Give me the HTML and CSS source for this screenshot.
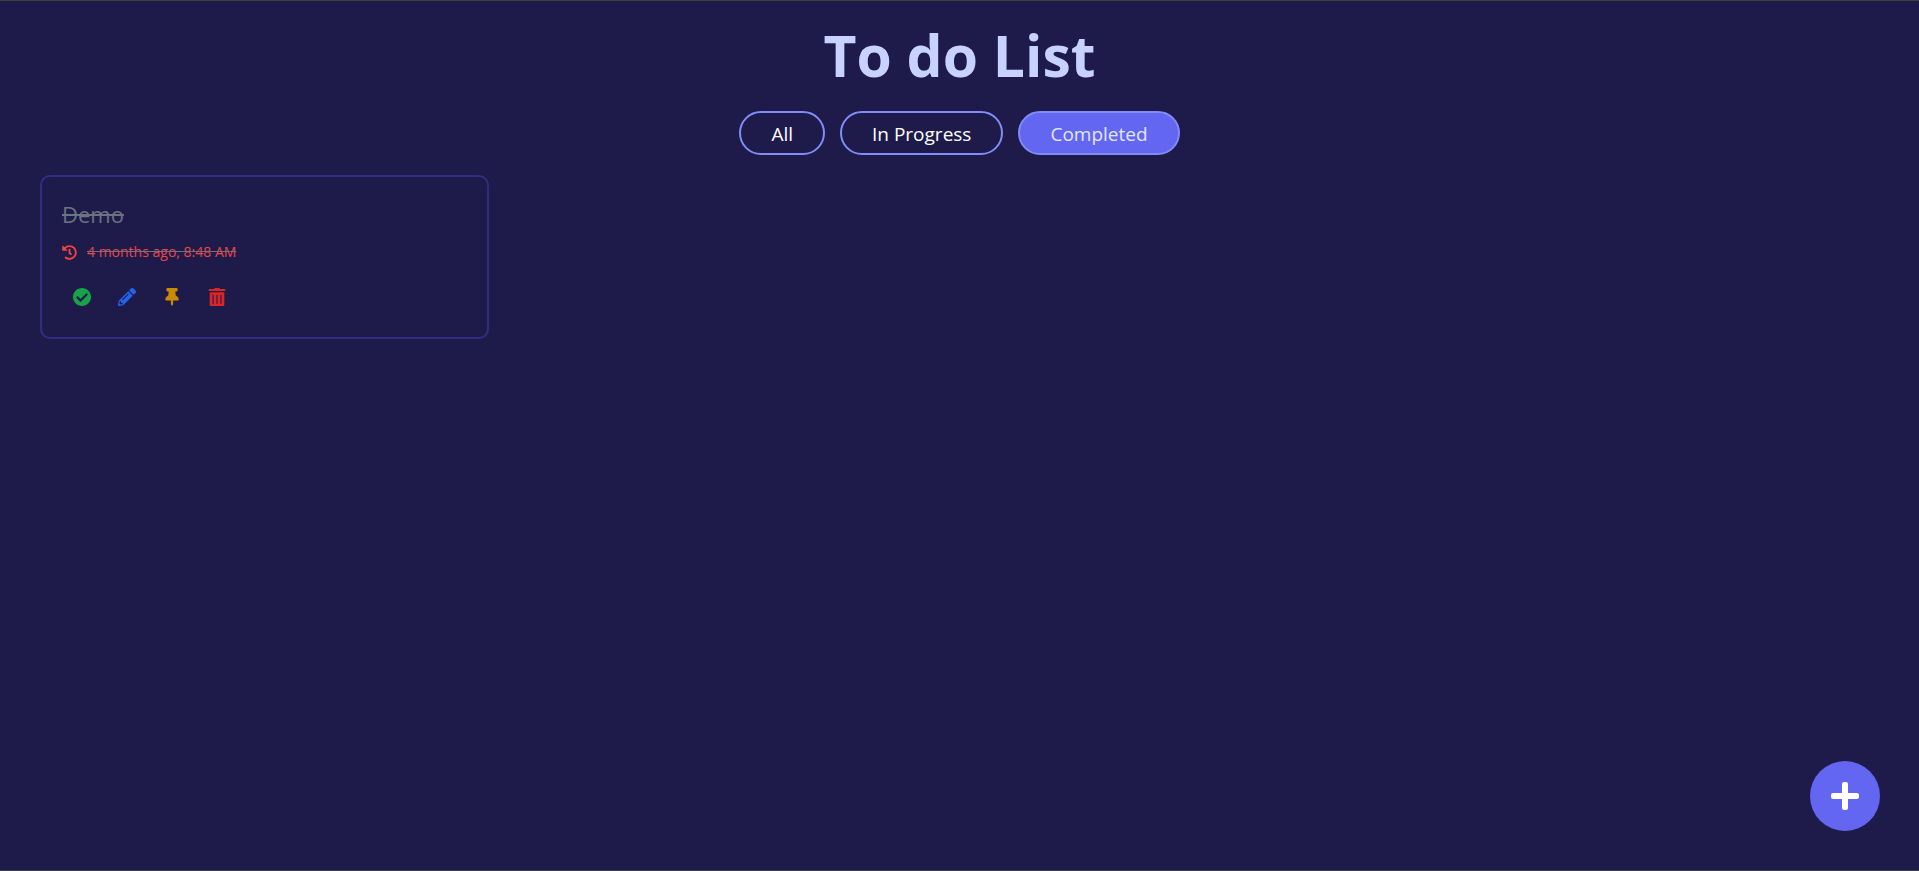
FILE: index.html
```html
<!DOCTYPE html>
<html lang="en">
<head>
<meta charset="utf-8">
<title>To do List</title>
<link rel="stylesheet" href="styles.css">
</head>
<body>
<main class="page">
  <h1 class="title">To do List</h1>
  <nav class="filters" aria-label="Filter tasks">
    <button class="filter" type="button">All</button>
    <button class="filter" type="button">In Progress</button>
    <button class="filter filter-active" type="button" aria-pressed="true">Completed</button>
  </nav>
  <section class="tasks">
    <article class="task">
      <h2 class="task-name">Demo</h2>
      <p class="task-time">
        <svg class="icon-time" viewBox="0 0 512 512" aria-hidden="true"><path d="M504 255.531c.253 136.64-111.18 248.372-247.82 248.468-59.015.042-113.223-20.53-155.822-54.911-11.077-8.94-11.905-25.541-1.839-35.607l11.267-11.267c8.609-8.609 22.353-9.551 31.891-1.984C173.062 425.135 212.781 440 256 440c101.705 0 184-82.311 184-184 0-101.705-82.311-184-184-184-48.814 0-93.149 18.969-126.068 49.932l50.754 50.754c10.08 10.08 2.941 27.314-11.313 27.314H24c-8.837 0-16-7.163-16-16V38.627c0-14.254 17.234-21.393 27.314-11.314l49.372 49.372C129.209 34.136 189.552 8 256 8c136.81 0 247.747 110.78 248 247.531zm-180.912 78.784l9.823-12.63c8.138-10.463 6.253-25.542-4.21-33.679L288 256.349V152c0-13.255-10.745-24-24-24h-16c-13.255 0-24 10.745-24 24v135.651l65.409 50.874c10.463 8.137 25.541 6.253 33.679-4.21z"/></svg>
        <s class="time-text">4 months ago, 8:48 AM</s>
      </p>
      <div class="actions">
        <button class="action done" type="button" aria-label="Mark done"><svg viewBox="8 8 496 496"><path d="M504 256c0 136.967-111.033 248-248 248S8 392.967 8 256 119.033 8 256 8s248 111.033 248 248zM227.314 387.314l184-184c6.248-6.248 6.248-16.379 0-22.627l-22.627-22.627c-6.248-6.249-16.379-6.249-22.628 0L216 308.118l-70.059-70.059c-6.248-6.248-16.379-6.248-22.628 0l-22.627 22.627c-6.248 6.248-6.248 16.379 0 22.627l104 104c6.249 6.249 16.379 6.249 22.628.001z"/></svg></button>
        <button class="action edit" type="button" aria-label="Edit"><svg viewBox="0 0 512 512"><path d="M497.9 142.1l-46.1 46.1c-4.7 4.7-12.3 4.7-17 0l-111-111c-4.7-4.7-4.7-12.3 0-17l46.1-46.1c18.7-18.7 49.1-18.7 67.9 0l60.1 60.1c18.8 18.7 18.8 49.1 0 67.9zM284.2 99.8L21.6 362.4.4 483.9c-2.9 16.4 11.4 30.6 27.8 27.8l121.5-21.3 262.6-262.6c4.7-4.7 4.7-12.3 0-17l-111-111c-4.8-4.7-12.4-4.7-17.1 0zM124.1 339.9c-5.5-5.5-5.5-14.3 0-19.8l154-154c5.5-5.5 14.3-5.5 19.8 0s5.5 14.3 0 19.8l-154 154c-5.5 5.5-14.3 5.5-19.8 0zM88 424h48v36.3l-64.5 11.3-31.1-31.1L51.7 376H88v48z"/></svg></button>
        <button class="action pin" type="button" aria-label="Pin"><svg viewBox="-64 0 512 512"><path d="M298.028 214.267L285.793 96H328c13.255 0 24-10.745 24-24V24c0-13.255-10.745-24-24-24H56C42.745 0 32 10.745 32 24v48c0 13.255 10.745 24 24 24h42.207L85.972 214.267C37.465 236.82 0 277.261 0 328c0 13.255 10.745 24 24 24h136v104.007c0 1.242.289 2.467.845 3.578l24 48c2.941 5.882 11.364 5.893 14.311 0l24-48a8.008 8.008 0 0 0 .845-3.578V352h136c13.255 0 24-10.745 24-24-.001-51.183-37.983-91.42-85.973-113.733z"/></svg></button>
        <button class="action delete" type="button" aria-label="Delete"><svg viewBox="0 0 512 512"><path fill-rule="evenodd" d="M182 0h148v28h150q10 0 10 10v50H22V38q0-10 10-10h150zM48 118h416v364q0 30-30 30H78q-30 0-30-30zM128 190v258h32V190zm112 0v258h32V190zm112 0v258h32V190z"/></svg></button>
      </div>
    </article>
  </section>
  <button class="add" type="button" aria-label="Add task"><svg viewBox="0 0 448 512"><path d="M416 208H272V64c0-17.670-14.330-32-32-32h-32c-17.670 0-32 14.330-32 32v144H32c-17.670 0-32 14.330-32 32v32c0 17.670 14.330 32 32 32h144v144c0 17.670 14.330 32 32 32h32c17.670 0 32-14.330 32-32V304h144c17.670 0 32-14.330 32-32v-32c0-17.670-14.330-32-32-32z"/></svg></button>
</main>
</body>
</html>
```
FILE: styles.css
```css
* { box-sizing: border-box; margin: 0; }

body {
  background: #1e1b4b;
  font-family: "Segoe UI", "Open Sans", "Noto Sans", sans-serif;
}

button {
  font: inherit;
  background: none;
  border: 0;
  cursor: pointer;
}

svg { display: block; fill: currentColor; }

.page {
  min-height: 100vh;
  padding: 24px 40px;
  border-top: 1px solid #3f3f3f;
  border-bottom: 1px solid #3f3f3f;
}

.title {
  color: #c7d2fe;
  font-size: 57px;
  line-height: 60px;
  text-align: center;
}

.filters {
  display: flex;
  justify-content: center;
  gap: 15px;
  margin: 26px 0 20px;
}

.filter {
  padding: 7px 30px 5px;
  border: 2px solid #818cf8;
  border-radius: 22px;
  color: #fff;
  font-size: 19px;
  line-height: 28px;
}

.filter-active { background: #6366f1; color: #e0e7ff; }

.tasks {
  display: grid;
  grid-template-columns: repeat(4, 1fr);
  gap: 15px;
}

.task {
  padding: 20px;
  border: 2px solid #312e81;
  border-radius: 10px;
}

.task-name {
  color: #6b7280;
  font-size: 22px;
  font-weight: 400;
  line-height: 34px;
  text-decoration: line-through;
}

.task-time {
  display: flex;
  align-items: center;
  gap: 10px;
  margin-top: 9px;
  color: #ef4444;
  font-size: 14px;
  line-height: 24px;
}

.icon-time { width: 15px; height: 15px; }
.time-text { text-decoration-color: #6b7280; }

.actions {
  display: flex;
  gap: 5px;
  margin-top: 13px;
}

.action { padding: 11px; }
.action svg { width: 18px; height: 18px; }
.done { color: #16a34a; }
.edit { color: #2563eb; }
.pin { color: #ca8a04; }
.delete { color: #dc2626; }

.add {
  position: fixed;
  right: 39px;
  bottom: 40px;
  display: grid;
  place-items: center;
  width: 70px;
  height: 70px;
  border-radius: 50%;
  background: #6366f1;
  color: #fff;
}

.add svg { width: 28px; height: 32px; }
```
